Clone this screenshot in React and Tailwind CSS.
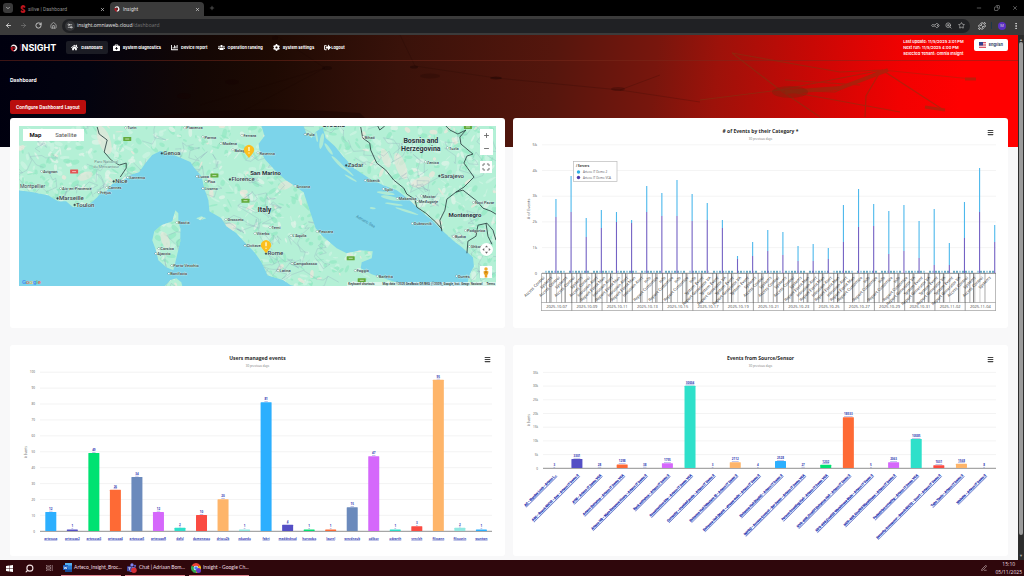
import React from "react";
import {
  ChevronDown, X, Plus, ArrowLeft, ArrowRight, RotateCw, House, Settings2, KeyRound, ZoomIn, Star,
  Puzzle, EllipsisVertical, Minus, Copy, Menu, Maximize, Search, PenLine,
} from "lucide-react";
import { FaHome, FaBriefcaseMedical, FaChartBar, FaUsers, FaCog, FaSignOutAlt } from "react-icons/fa";

/* ---------- browser chrome ---------- */

function BrowserBar() {
  return (
    <header className="font-['Inter',sans-serif] text-[5px] leading-none">
      <div className="flex h-4 items-end bg-black text-[#8d8d8d]">
        <button aria-label="Search tabs" className="mb-[3px] ml-[3px] flex size-[10px] items-center justify-center rounded-[3px] bg-[#3a3a3a] text-[#c9c9c9]">
          <ChevronDown size={6} strokeWidth={3} />
        </button>
        <div className="ml-[5px] flex h-[14px] w-[92px] items-center pl-[2px] pr-[5px]">
          <svg viewBox="0 0 6 8" className="h-2 w-[6px]" aria-hidden="true">
            <path d="M3 0 5 1.2 5 2.6 3 2 2 3 5 5.2 5 7 3 8 1 7 1 5.6 3 6.3 4 5.5 1 3.5 1 1.5Z" fill="#c2161e" stroke="#c2161e" strokeWidth="0.600" />
          </svg>
          <span className="ml-[2px] flex-1 whitespace-nowrap font-['Roboto',sans-serif]">silive | Dashboard</span>
          <button aria-label="Close silive tab" className="text-[#d5d5d5]"><X size={5} strokeWidth={3} /></button>
        </div>
        <div className="flex h-[14px] w-[94px] items-center rounded-t-[4px] bg-[#3b3b3b] px-1 text-[#dedede]">
          <LogoMark className="size-[6px]" />
          <span className="ml-[3px] flex-1 font-['Roboto',sans-serif]">Insight</span>
          <button aria-label="Close Insight tab"><X size={5} strokeWidth={3} /></button>
        </div>
        <button aria-label="New tab" className="mb-[5px] ml-[5px] text-[#8a8a8a]"><Plus size={6} /></button>
        <div className="mb-[5px] ml-auto flex gap-3 pr-[6px] text-[#aaa]">
          <button aria-label="Minimise"><Minus size={6} /></button>
          <button aria-label="Restore"><Copy size={6} className="-scale-x-100" /></button>
          <button aria-label="Close window"><X size={6} /></button>
        </div>
      </div>
      <div className="flex h-[19px] items-center bg-[#3b3b3b] pl-[5px] pr-1 text-[#d6d6d6]">
        <div className="flex w-[57px] items-center gap-2">
          <button aria-label="Back"><ArrowLeft size={7} strokeWidth={3} /></button>
          <button aria-label="Forward" className="text-[#848484]"><ArrowRight size={7} strokeWidth={2} /></button>
          <button aria-label="Reload"><RotateCw size={7} strokeWidth={3} /></button>
          <button aria-label="Home"><House size={7} strokeWidth={2} /></button>
        </div>
        <div className="flex h-[14px] flex-1 items-center rounded-full bg-[#202124] pl-[3px] pr-[5px]">
          <span className="flex size-[10px] items-center justify-center rounded-full bg-[#36373a]">
            <Settings2 size={6} strokeWidth={3} />
          </span>
          <span className="ml-[2px] flex-1 font-['Open_Sans',sans-serif] font-medium text-[#e8e8e8]">insight.omniaweb.cloud<span className="text-[#777]">/dashboard</span></span>
          <div className="flex gap-[6px]">
            <KeyRound size={7} className="rotate-45" /><ZoomIn size={7} /><Star size={7} />
          </div>
        </div>
        <div className="ml-2 flex items-center gap-[5px]">
          <button aria-label="Extensions"><Puzzle size={8} strokeWidth={3} /></button>
          <span className="h-[7px] w-px bg-[#1d3748]" />
          <span className="ml-px flex size-2 items-center justify-center rounded-full bg-[#5b2fc4] text-[4px]">M</span>
          <button aria-label="Browser menu" className="ml-px"><EllipsisVertical size={8} strokeWidth={3} /></button>
        </div>
      </div>
    </header>
  );
}

function LogoMark({ className }) {
  return (
    <svg viewBox="0 0 16 16" className={className} aria-hidden="true">
      <path d="M5 1.5A7 7 0 1 1 8 15 L6 12.5A4.6 4.6 0 0 0 11 8 4 4 0 0 0 6 4L1.5 6Q2 3 5 1.5Z" fill="#f5f0f0" />
      <path d="M1 7 7 4.5Q4 8 6.5 12L8.5 15.2Q1.500 14.500 1 7Z" fill="#c01522" />
      <circle cx="8.300" cy="7.800" r="2.200" fill="#8c111b" />
    </svg>
  );
}

/* ---------- app header ---------- */

const nav = [
  { label: "Dashboard", Icon: FaHome, active: true },
  { label: "System diagnostics", Icon: FaBriefcaseMedical },
  { label: "Device report", Icon: FaChartBar },
  { label: "Operation ranking", Icon: FaUsers },
  { label: "System settings", Icon: FaCog },
  { label: "Logout", Icon: FaSignOutAlt, tight: true },
];

function Flag() {
  return (
    <svg viewBox="0 0 14 12" className="h-[6px] w-[7px]" aria-hidden="true">
      <rect width="14" height="12" fill="#fff" />
      {[0, 1, 2, 3].map((i) => <rect key={i} y={i * 3.4} width="14" height="1.8" fill="#d8455a" />)}
      <rect width="8" height="7" fill="#31408f" />
    </svg>
  );
}

function AppHeader() {
  return (
    <div className="relative flex h-[26px] items-center border-b border-[#7a2a1c]/50 px-[10px] text-[4px] font-bold leading-[6px] text-white">
      <a href="#home" className="flex items-center text-[9px] font-bold leading-none" aria-label="Insight">
        <LogoMark className="size-2" />
        <span className="ml-px text-[#5c0f1d]">I</span><span>NSIGHT</span>
      </a>
      <nav className="ml-[10px] flex">
        {nav.map(({ label, Icon, active, tight }) => (
          <a key={label} href="#page"
            className={`flex h-[13px] items-center whitespace-nowrap rounded-[2px] px-[5px] ${tight ? "gap-0" : "gap-[3px]"} ${active ? "bg-[#1b1c24]" : ""}`}>
            <Icon size={7} />{label}
          </a>
        ))}
      </nav>
      <p className="ml-auto mr-[10px] whitespace-nowrap font-semibold">
        Last update: 11/5/2025 3:01 PM<br />Next run: 11/5/2025 4:00 PM<br />Selected Tenant: Omnia Insight
      </p>
      <button className="mb-[6px] flex h-3 items-center gap-[3px] rounded-[2px] bg-white px-[5px] text-[#344767]">
        <Flag />English
      </button>
    </div>
  );
}

function HeroNetwork() {
  return (
    <svg viewBox="0 35 1018 112" preserveAspectRatio="none" className="absolute inset-x-0 top-0 h-28 w-full" aria-hidden="true">
      <g fill="none" stroke="#7d3a12" strokeWidth="1.200" opacity="0.500">
        <path d="M732 53 780 90 835 92 882 70 942 109M732 53 840 72 882 70M780 90 882 70M865 117 866 96 880 72M780 90 900 112M785 80 860 85M820 117 780 90M700 100 780 90" />
        <path d="M785 92 840 88 888 70" strokeWidth="4" />
        <path d="M882 70 972 79" strokeWidth="0.700" />
        <path d="M925 107 945 110M965 79H976" strokeWidth="3" />
      </g>
      <ellipse cx="790" cy="92" rx="18" ry="6" fill="#6d2a10" opacity="0.400" />
      <g fill="none" stroke="#160502" strokeWidth="0.700" opacity="0.250">
        <path d="M200 105 325 68 275 35M400 35 415 66 496 78 620 90 700 102M620 90 660 75M230 118 325 68" />
      </g>
      <g fill="#150302" opacity="0.400">
        <ellipse cx="327" cy="68" rx="5" ry="2" /><ellipse cx="275" cy="38" rx="3" ry="2" />
        <ellipse cx="184" cy="96" rx="7" ry="3" /><ellipse cx="232" cy="82" rx="7" ry="2.500" />
        <ellipse cx="414" cy="67" rx="4" ry="1.500" /><ellipse cx="430" cy="76" rx="10" ry="2.500" opacity="0.500" />
        <ellipse cx="496" cy="78" rx="6" ry="1.500" /><ellipse cx="618" cy="89" rx="7" ry="2" opacity="0.600" />
        <path d="M140 118Q250 104 360 113L365 118Z" />
      </g>
    </svg>
  );
}

/* ---------- map ---------- */

function makeRandom(seed) {
  let s = seed;
  return () => { s = (s * 16807) % 2147483647; return s / 2147483647; };
}

const land = [
  "M19 126V190L33 192 48 195 58 201 66 201 73 207 88 205 97 197 101 192 107 190 112 184 122 181 130 175 139 172 146 162 152 155 160 151 168 153 176 156 190 162 194 168 201 176 204 188 208 200 209 211 221 218 226 226 236 233 245 243 254 252 261 262 267 275 283 280 290 285 296 286H404L395 282 371 274 360 268 361 262 371 258 372 251 360 250 346 253 336 248 322 236 315 228 309 210 303 192 296 187 285 180 276 172 265 160 259 150 258 144 264 136 261 126Z",
  "M303 126 306 134 311 138 315 132 322 127 325 138 334 146 343 157 353 168 368 178 382 185 396 190 408 199 418 209 430 219 441 230 452 240 461 247 472 257 473 266 468 276 466 286H495V126Z",
  "M175 210 178 213 178 222 180 228 180 241 176 258 173 270 166 267 158 260 156 251 152 240 154 231 161 225 172 221Z",
  "M164 286 170 280 176 278 181 282 182 286Z",
  "M196 218 201 216 206 218 200 220Z",
];
const islands = [
  [321, 141, 2, 8, 10], [328, 149, 1.5, 7, -35], [338, 163, 1.5, 10, -45], [346, 170, 1, 9, -50], [350, 178, 1, 7, -60],
  [385, 193, 9, 1.5, 8], [390, 198, 10, 2, 12], [393, 204, 9, 1, 8], [406, 211, 12, 1.2, 18], [372, 208, 3, 1, 5], [316, 137, 1, 5, -10],
];
const borders = [
  "M97 127 99 134 107 140 104 152 111 160 119 165 126 163 126 168 120 177",
  "M360 127 362 138 369 143 370 150 376 163 385 170 393 180 403 188 406 194 414 199 416 207 425 213 435 222 441 229",
  "M441 231 439 220 444 210 446 199 455 192 463 187 473 177 463 163 466 156 472 154 460 144 459 137 465 130 457 134 449 130 445 126",
  "M455 192 462 190 476 201 482 208 490 211 495 214M466 253 467 241 475 236 477 225 486 223 492 230 495 240M485 223 487 236 491 244M377 126 379 130 384 126",
];
const cities = [
  ["Turin", 125, 129.5], ["Piacenza", 184, 129.5], ["Parma", 202, 138.5], ["Modena", 220, 145], ["Ferrara", 241, 137],
  ["Bologna", 232, 151.5], ["Ravenna", 257, 154.5], ["Genoa", 161, 155], ["Avignon", 41, 173], ["Aix-en-Provence", 60, 190],
  ["Marseille", 57, 200], ["Toulon", 74, 206.5], ["Nice", 113, 183], ["Cannes", 106, 189], ["Fréjus", 98, 194], ["Sanremo", 127, 179],
  ["Lucca", 196, 178], ["Pisa", 205, 183], ["Livorno", 202, 190], ["Florence", 229, 181], ["Grosseto", 225, 221], ["Bastia", 176, 224],
  ["Corsica", 158, 250], ["Ajaccio", 155, 255], ["Porto-Vecchio", 171, 267], ["Bonifacio", 168, 275], ["Civitavecchia", 244, 247],
  ["Ancona", 294, 187.5], ["Terni", 269, 229], ["Viterbo", 254, 235], ["Pescara", 316, 233], ["L'Aquila", 290, 237], ["Rome", 265, 255],
  ["Latina", 277, 272], ["Foggia", 354, 272], ["Barletta", 376, 277.5], ["Pula", 304, 136], ["Zadar", 345, 167], ["Šibenik", 364, 182],
  ["Split", 382, 190.5], ["Bihać", 362, 138.5], ["Tuzla", 446, 149.5], ["Zenica", 424, 163.5], ["Sarajevo", 438, 177.5],
  ["Mostar", 420, 197.5], ["Međugorje", 416, 203], ["Makarska", 396, 200], ["Dubrovnik", 411, 225], ["Podgorica", 464, 232],
  ["Budva", 452, 238], ["Shkodër", 468, 248], ["Durrës", 455, 277.5], ["Novi Pazar", 472, 204], ["Campobasso", 291, 265],
];
const bigCities = ["Genoa", "Marseille", "Nice", "Florence", "Rome", "Sarajevo", "Zadar", "Toulon"];

function MapArt() {
  const rnd = makeRandom(77);
  const patches = Array.from({ length: 1500 }, () => [19 + rnd() * 476, 126 + rnd() * 160, 1 + rnd() * 4, 0.5 + rnd() * 2, rnd() * 180, rnd()]);
  const roads = Array.from({ length: 130 }, () => {
    let x = 19 + rnd() * 476, y = 126 + rnd() * 160, d = `M${x} ${y}`;
    for (let i = 0; i < 6; i++) { x += (rnd() - 0.5) * 24; y += (rnd() - 0.5) * 20; d += `L${x} ${y}`; }
    return d;
  });
  return (
    <svg viewBox="19 126 476 160" className="block w-full font-[Roboto,sans-serif]" role="img" aria-label="Map of Italy">
      <defs><clipPath id="land">{land.map((d) => <path key={d} d={d} />)}</clipPath></defs>
      <rect x="19" y="126" width="476" height="160" fill="#7cd4ea" />
      {land.map((d) => <path key={d} d={d} fill="#b4f0d6" />)}
      <g clipPath="url(#land)">
        {patches.map(([x, y, a, b, r, k], i) => (
          <ellipse key={i} cx={x} cy={y} rx={a} ry={b} transform={`rotate(${r} ${x} ${y})`}
            fill={k < 0.4 ? "#93e8c3" : k < 0.75 ? "#cdf4e2" : k < 0.93 ? "#e3f3ea" : "#f2e6dc"} opacity="0.700" />
        ))}
        {[[104, 140, 6, 15], [85, 176, 8, 4], [285, 185, 8, 4], [400, 166, 5, 14], [420, 182, 10, 5], [385, 158, 4, 10], [228, 228, 8, 5], [165, 240, 4, 9]].map(([x, y, a, b]) => (
          <ellipse key={x + y} cx={x} cy={y} rx={a} ry={b} fill="#eee5da" opacity="0.600" transform={`rotate(-20 ${x} ${y})`} />
        ))}
        {roads.map((d, i) => <path key={i} d={d} fill="none" stroke="#8fa9bd" strokeWidth="0.500" opacity="0.600" />)}
      </g>
      {islands.map(([x, y, a, b, r], i) => <ellipse key={i} cx={x} cy={y} rx={a} ry={b} fill="#aeead5" transform={`rotate(${r} ${x} ${y})`} />)}
      {borders.map((d) => <path key={d} d={d} fill="none" stroke="#34484a" strokeWidth="0.900" />)}
      {[[127, 139, "#63ab3b"], [214, 175.5, "#63ab3b"], [245, 200.5, "#63ab3b"], [74, 171.5, "#e25353"], [350, 258, "#63ab3b"], [361, 280, "#63ab3b"], [467, 127, "#63ab3b"]].map(([x, y, c]) => (
        <g key={x}><rect x={x - 4} y={y - 2} width="8" height="4" rx="0.500" fill={c} /><rect x={x - 2} y={y - 0.5} width="4" height="1" fill="#fff" opacity="0.600" /></g>
      ))}
      <g fill="#33444a" fontSize="5" stroke="#d9f3ea" strokeWidth="0.600" paintOrder="stroke">
        {cities.map(([name, x, y]) => {
          const big = bigCities.includes(name);
          return (
            <g key={name}>
              <circle cx={x + 0.5} cy={y - 1.7} r="0.900" fill={big ? "#33444a" : "#fff"} stroke="#33444a" strokeWidth="0.400" />
              <text x={x + 2} y={y} fontSize={big ? 6 : 4} fontWeight="500">{name}</text>
            </g>
          );
        })}
        <text x="20" y="187.500">Montpellier</text>
        <text x="94" y="163" fontSize="4" fill="#4f8d7a">Parc National</text>
        <text x="93" y="168" fontSize="4" fill="#4f8d7a">du Mercantour</text>
      </g>
      <g fill="#26343a" fontWeight="700" fontSize="7" textAnchor="middle" stroke="#d9f3ea" strokeWidth="0.700" paintOrder="stroke">
        <text x="264" y="211.500">Italy</text><text x="265" y="174.500" fontSize="6">San Marino</text>
        <text x="420" y="143">Bosnia and</text><text x="420" y="150.500">Herzegovina</text>
        <text x="464" y="216.500" fontSize="6">Montenegro</text><text x="333" y="127">Croatia</text>
      </g>
      <text x="355" y="217" fontSize="4" fill="#3f86a4" transform="rotate(30 355 217)">Adriatic Sea</text>
      {[[248.5, 151], [265.5, 246]].map(([x, y]) => (
        <g key={x}>
          <path d={`M${x} ${y + 7}L${x - 4} ${y + 2}A5 5 0 1 1 ${x + 4} ${y + 2}Z`} fill="#fcbf1e" />
          <path d={`M${x} ${y - 4}V${y}M${x} ${y + 1.5}V${y + 2.5}`} stroke="#fff3c8" strokeWidth="1.500" />
        </g>
      ))}
    </svg>
  );
}

function MapCard() {
  return (
    <section className="rounded-[3px] bg-white px-[9px] pt-2">
      <div className="relative overflow-hidden font-[Roboto,sans-serif] text-[6px] leading-none">
        <MapArt />
        <div className="absolute left-1 top-[3px] flex h-3 items-center bg-white">
          <button className="w-[25px] font-semibold text-black">Map</button>
          <button className="w-9 text-[#555]">Satellite</button>
        </div>
        <div className="absolute right-1 top-[3px] flex w-3 flex-col items-center text-[#666]">
          <button aria-label="Zoom in" className="flex size-[13px] items-center justify-center bg-white"><Plus size={7} strokeWidth={3} /></button>
          <button aria-label="Zoom out" className="flex size-[13px] items-center justify-center bg-white"><Minus size={7} strokeWidth={3} /></button>
          <button aria-label="Full screen" className="mt-[6px] flex size-3 items-center justify-center bg-white"><Maximize size={8} strokeWidth={3} /></button>
        </div>
        <div className="absolute bottom-2 right-1 flex w-3 flex-col items-center gap-[10px]">
          <button aria-label="Map camera controls" className="flex size-[13px] items-center justify-center rounded-full bg-white">
            <svg viewBox="0 0 24 24" className="size-[9px]" fill="#666"><path d="m12 1 4 5H8ZM12 23l4-5H8ZM1 12l5-4v8ZM23 12l-5-4v8Z" /></svg>
          </button>
          <button aria-label="Street view" className="flex size-3 items-center justify-center bg-white">
            <svg viewBox="0 0 12 22" className="h-[11px] w-[6px]"><circle cx="6" cy="4" r="3.500" fill="#f0a92a" /><path d="M1 9Q6 6 11 9L10 15H8.500V21H3.500V15H2Z" fill="#eaa020" /><path d="M4 9H8L7 12H5Z" fill="#b97612" /></svg>
          </button>
        </div>
        <span className="absolute bottom-px left-[3px] text-[6px] font-medium">
          <span className="text-[#4285f4]">G</span><span className="text-[#ea6a50]">o</span><span className="text-[#f4c63d]">o</span><span className="text-[#4285f4]">g</span><span className="text-[#6db98a]">l</span><span className="text-[#ea6a50]">e</span>
        </span>
        <div className="absolute bottom-0 right-0 flex gap-1 whitespace-nowrap bg-[#eaf6f3]/70 px-px text-[3px] font-medium leading-[4px] text-[#1d2b2f]">
          <span className="mr-1">Keyboard shortcuts</span><span>Map data ©2025 GeoBasis-DE/BKG (©2009), Google, Inst. Geogr. Nacional</span><a href="#terms">Terms</a>
        </div>
      </div>
    </section>
  );
}

/* ---------- charts ---------- */

function ChartCard({ title, children }) {
  return (
    <section className="relative rounded-[3px] bg-white font-['Open_Sans',sans-serif]">
      <div className="flex flex-col items-center pb-[2px] pt-[10px]">
        <h2 className="text-[5px] font-bold leading-[6px] text-[#2d2d2d]">{title}</h2>
        <p className="mt-[3px] text-[3px] leading-1 text-[#777]">30 previous days</p>
      </div>
      <button aria-label={`${title} menu`} className="absolute right-[14px] top-[11px] text-[#444]"><Menu size={7} strokeWidth={4} /></button>
      {children}
    </section>
  );
}

// [top of the first server's share, top of the second server's share]
const tops = [
  [199, 217], [176, 212], [218, 237], [210, 228], [212, 222], [220, 223], [186, 212], [193, 216], [180, 216], [194, 221],
  [203, 220], [220, 228], [256, 259], [242, 256], [230, 251], [232, 255], [246, 261], [244, 261], [248, 259], [205, 242],
  [189, 227], [204, 226], [211, 254], [205, 251], [221, 258], [209, 265], [243, 265], [202, 238], [168, 212], [225, 242],
];
const categories = ["Access Control", "Report Event Man", "Info", "Report Generator VA", "Systems", "Intrusion Alert", "Report Customize", "System Event"];

function CategoryChart() {
  return (
    <svg viewBox="513 143 495 185" className="block w-full" role="img" aria-label="Events by category">
      {[5, 4, 3, 2, 1, 0].map((k) => (
        <g key={k}>
          <line x1="542" x2="996" y1={273.3 - k * 25.7} y2={273.3 - k * 25.7} stroke={k ? "#ececec" : "#333"} strokeWidth="0.600" />
          <text x="537" y={274.5 - k * 25.7} fontSize="4" textAnchor="end" fill="#555">{k ? `${k}k` : "0"}</text>
        </g>
      ))}
      <text fontSize="4" fill="#555" textAnchor="middle" transform="translate(530 209) rotate(-90)"># of Events</text>
      {Array.from({ length: 150 }, (_, i) => i % 8 !== 7 && (
        <rect key={i} x={545 + i * 3} y="270.800" width="2" height="2" fill={i % 3 ? "#4c9ab8" : "#8fc6de"} opacity="0.850" />
      ))}
      {tops.map(([a, b], i) => {
        const x = 555.4 + i * 15.13;
        return (
          <g key={i}>
            <rect x={x} y={a} width="1.100" height={b - a} fill="#4db8ec" />
            <rect x={x} y={b} width="1.100" height={273 - b} fill="#7462c4" />
          </g>
        );
      })}
      <g fill="none" stroke="#777" strokeWidth="0.500">
        <path d="M541.500 273V311M995.500 273V311M541.500 302.500H995.500M541.500 310.500H995.500" />
        {Array.from({ length: 89 }, (_, i) => i % 7 !== 4 && <line key={i} x1={546.5 + i * 5.04} x2={546.5 + i * 5.04} y1="273" y2="302.500" stroke={i % 3 === 0 ? "#555" : "#999"} />)}
        {Array.from({ length: 29 }, (_, i) => <line key={i} x1={550 + i * 15.13} x2={550 + i * 15.13} y1="273" y2="302.500" stroke="#777" strokeWidth="1" />)}
        {Array.from({ length: 14 }, (_, i) => <line key={i} x1={571.8 + i * 30.26} x2={571.8 + i * 30.26} y1="273" y2="310.500" stroke="#444" />)}
      </g>
      <g fontSize="4" fill="#222" textAnchor="end">
        {Array.from({ length: 60 }, (_, i) => (
          <text key={i} transform={`translate(${545 + i * 7.56} 278) rotate(-45)`}>{categories[(i * 3 + (i % 7)) % 8]}</text>
        ))}
      </g>
      <g fontSize="4" fill="#444" textAnchor="middle">
        {Array.from({ length: 15 }, (_, i) => {
          const d = new Date(Date.UTC(2025, 9, 7 + i * 2)).toISOString().slice(0, 10);
          return <text key={i} x={556.7 + i * 30.26} y="308">{d}</text>;
        })}
      </g>
      <g fontSize="4" fill="#555">
        <rect x="573.500" y="161.500" width="43.500" height="20" fill="#fff" stroke="#bbb" strokeWidth="0.700" />
        <text x="576" y="167" fontWeight="700" fill="#333" fontSize="3">/ Servers</text>
        <circle cx="578.500" cy="172" r="1.700" fill="#2fb1e6" /><text x="583" y="173.300" fontSize="3">Arteco IT Demo 2</text>
        <circle cx="578.500" cy="177.500" r="1.700" fill="#4b3aa9" /><text x="583" y="178.800" fontSize="3">Arteco IT Demo VCA</text>
      </g>
    </svg>
  );
}

const colors = ["#2caffe", "#544fc5", "#00e272", "#fe6a35", "#6b8abc", "#d568fb", "#2ee0ca", "#fa4b42", "#feb56a", "#91e8e1"];

const users = [
  ["artecosa", 12], ["artecosa2", 1], ["artecosa3", 49], ["artecosa4", 26], ["artecosa5", 34], ["artecosaR", 12], ["dafsl", 2],
  ["domenesso", 10], ["drisco2k", 20], ["eduardo", 1], ["fabri", 81], ["maddndnod", 4], ["horvados", 1], ["laurel", 1],
  ["wnvdneub", 15], ["odikov", 47], ["odearth", 1], ["vrnclch", 3], ["filcsann", 95], ["filcosnin", 2], ["wuntwn", 1],
];

function UsersChart() {
  return (
    <svg viewBox="10 370 495 186" className="block w-full" role="img" aria-label="Users managed events">
      {Array.from({ length: 11 }, (_, k) => (
        <g key={k}>
          <line x1="40" x2="492" y1={531.3 - k * 15.91} y2={531.3 - k * 15.91} stroke={k ? "#ebebeb" : "#444"} strokeWidth="0.600" />
          <text x="35" y={532.5 - k * 15.91} fontSize="3" textAnchor="end" fill="#555">{k * 10}</text>
        </g>
      ))}
      <text fontSize="3" fill="#555" textAnchor="middle" transform="translate(27 452) rotate(-90)"># Events</text>
      {users.map(([name, n], i) => {
        const x = 50.8 + i * 21.53, h = n * 1.591;
        return (
          <g key={name} textAnchor="middle" fontWeight="700" fill="#3542b4" fontSize="3">
            <rect x={x - 5.5} y={531 - h} width="11" height={h} rx="0.500" fill={colors[i % 10]} />
            <text x={x} y={529 - h} textDecoration="underline">{n}</text>
            <a href={`#${name}`}><text x={x} y="539.500" textDecoration="underline">{name}</text></a>
          </g>
        );
      })}
    </svg>
  );
}

const sources = [
  ["AC - Stardus Lock - Arteco I...", 3], ["A5C - Bosch MIC12 - Axe - Arteco IT Demo 2", 3301], ["ATM - Arteco IT Demo VCA", 28],
  ["Arteco Entrance - Arteco IT Demo VCA", 1298], ["Arteco HQ - Main Entrance Hours - Arteco IT Demo 2", 38], ["Back entrance - Arteco IT Demo 2", 1755],
  ["Construction Site - Arteco IT Demo VCA", 30004], ["Correctly - crushed posts - Arteco IT Demo 2", 3], ["Entrance Hall (Western 5) - Arteco IT Demo 2", 2112],
  ["Entrance Hall (Main) - stream main - Arteco IT Demo 2", 4], ["Entrance Hall (Rapid) - Arteco IT Demo 2", 2528],
  ["IMPRO - Access Control - Bar Demo - Arteco IT Demo VCA", 27], ["Person Counting Hall - Arteco IT Demo VCA", 1202],
  ["NVR-409_Conf01 Entrance Hall - Arteco IT Demo 2", 18533], ["NVR-409_Conf02 Warehouse Main - Arteco IT Demo 2", 5],
  ["NVR-409_Conf03 Warehouse - Arteco IT Demo 2", 2063], ["Pedestrian crossing - Arteco IT Demo VCA", 10585],
  ["Security Connector - Bosch MIC12 - Door1 - Arteco IT Demo 2", 1031], ["Tapo Testo - Arteco IT Demo 2", 1568], ["Website - Arteco IT Demo 2", 8],
];

function SourcesChart() {
  return (
    <svg viewBox="513 370 495 186" className="block w-full" role="img" aria-label="Events from source or sensor">
      {Array.from({ length: 8 }, (_, k) => (
        <g key={k}>
          <line x1="543" x2="996" y1={468.3 - k * 13.7} y2={468.3 - k * 13.7} stroke={k ? "#ebebeb" : "#444"} strokeWidth="0.600" />
          <text x="538" y={469.5 - k * 13.7} fontSize="3" textAnchor="end" fill="#555">{k ? `${k * 5}k` : "0"}</text>
        </g>
      ))}
      <text fontSize="3" fill="#555" textAnchor="middle" transform="translate(530 420) rotate(-90)"># Events</text>
      {sources.map(([name, n], i) => {
        const x = 554.3 + i * 22.62, h = n * 0.00274;
        return (
          <g key={name} fontWeight="700" fill="#3542b4" fontSize="3">
            {n > 100 && <rect x={x - 5.5} y={468 - h} width="11" height={h} rx="0.500" fill={colors[i % 10]} />}
            <text x={x} y={466 - h} textAnchor="middle" textDecoration="underline">{n}</text>
            <a href="#source" className="font-['Inter',sans-serif]">
              <text textAnchor="end" textDecoration="underline" stroke="#3542b4" strokeWidth="0.250" transform={`translate(${x + 2} 475.5) rotate(-45)`}>{name}</text>
            </a>
          </g>
        );
      })}
    </svg>
  );
}

/* ---------- taskbar ---------- */

function WordIcon() {
  return (
    <svg viewBox="0 0 18 18" className="size-[9px] shrink-0" aria-hidden="true">
      <rect x="4" width="14" height="18" rx="1" fill="#2b7cd3" /><rect x="4" width="14" height="5" fill="#56b0f2" /><rect x="4" y="13" width="14" height="5" fill="#164a96" />
      <rect y="4" width="10" height="10" rx="1" fill="#185abd" /><path d="m2 7 1.500 5L5 8l1.500 4L8 7" fill="none" stroke="#fff" strokeWidth="1.200" />
    </svg>
  );
}
function TeamsIcon() {
  return (
    <svg viewBox="0 0 18 18" className="size-[10px] shrink-0" aria-hidden="true">
      <circle cx="9" cy="3.500" r="3" fill="#7f85f2" /><circle cx="14.500" cy="5" r="2" fill="#5c63d2" /><rect x="4" y="7" width="12" height="9" rx="3" fill="#6670df" />
      <rect y="6" width="9" height="9" rx="1" fill="#4048a8" /><path d="M2 8.500H7M4.500 8.500V13" stroke="#fff" /><circle cx="12.500" cy="13" r="5" fill="#d52e36" />
    </svg>
  );
}
function ChromeIcon() {
  return (
    <svg viewBox="0 0 18 18" className="size-[10px] shrink-0" aria-hidden="true">
      <path d="M9 9 1.200 4.500A9 9 0 0 1 16.800 4.500Z" fill="#ea4335" /><path d="M9 9 16.800 4.500A9 9 0 0 1 9 18Z" fill="#fbbc05" /><path d="M9 9V18A9 9 0 0 1 1.200 4.500Z" fill="#34a853" />
      <circle cx="9" cy="9" r="4.200" fill="#fff" /><circle cx="9" cy="9" r="3.200" fill="#4285f4" /><circle cx="13.500" cy="13.500" r="4.500" fill="#6338c8" />
    </svg>
  );
}

const tasks = [["Arteco_Insight_Broc...", WordIcon], ["Chat | Adriaan Bom...", TeamsIcon], ["Insight - Google Ch...", ChromeIcon]];

function Taskbar() {
  return (
    <footer className="flex h-4 items-center bg-[#2f070c] font-['Open_Sans',sans-serif] text-[5px] leading-none text-[#f0dfe1]">
      <div className="flex w-[61px] items-center gap-3 pl-[6px]">
        <button aria-label="Start">
          <svg viewBox="0 0 14 14" className="size-[7px]" fill="#fff"><path d="M0 2 6.500 1V6.600H0ZM7.300.900 14 0V6.600H7.300ZM0 7.400H6.500V13L0 12ZM7.300 7.400H14V14L7.300 13.100Z" /></svg>
        </button>
        <button aria-label="Search"><Search size={9} strokeWidth={3} className="-scale-x-100" /></button>
        <button aria-label="Task view">
          <svg viewBox="0 0 14 12" className="h-[6px] w-[7px]" fill="none" stroke="#b79da0" strokeWidth="1.300"><path d="M1 0V2H9V0M1 12V10H9V12M1 4H9V8H1ZM12.500 0V12" /></svg>
        </button>
      </div>
      <div className="flex gap-1 self-stretch">
        {tasks.map(([label, Icon]) => (
          <button key={label} className="flex w-[60px] items-center gap-[2px] whitespace-nowrap border-b border-[#e58a94] pl-[2px] font-['Lato',sans-serif]">
            <Icon />{label}
          </button>
        ))}
      </div>
      <PenLine size={6} className="ml-auto mr-2" aria-hidden="true" />
      <div className="pr-[2px] text-center leading-2">15:10<br />05/11/2025</div>
    </footer>
  );
}

/* ---------- page ---------- */

function Scrollbar() {
  return (
    <div className="flex w-[6px] flex-col items-center justify-between bg-[#2c2c2c] py-[2px]" aria-hidden="true">
      <span className="text-[4px] leading-[5px] text-[#aaa]">▲</span>
      <span className="mb-[18px] w-1 flex-1 rounded-full bg-[#9b9b9b]" />
      <span className="text-[4px] leading-[5px] text-[#aaa]">▼</span>
    </div>
  );
}

export default function App() {
  return (
    <div className="flex min-h-screen flex-col overflow-hidden bg-[#f8f8f9]">
      <BrowserBar />
      <div className="flex flex-1">
        <main className="relative min-w-0 flex-1 bg-[linear-gradient(96deg,#00000f_0%,#03030f_9%,#140704_20%,#1e0a03_27%,#39120a_39%,#55160d_54%,#78160d_64%,#9d120a_70%,#c80805_79%,#f20101_88%,#ff0000_94%)] bg-[length:100%_112px] bg-no-repeat font-['Inter',sans-serif]">
          <HeroNetwork />
          <AppHeader />
          <div className="relative px-[10px] pb-1 pt-[15px]">
            <h1 className="text-[5px] font-bold leading-2 text-white">Dashboard</h1>
            <button className="mt-4 block h-[14px] rounded-[2px] bg-[#b90d0d] px-[6px] font-['Roboto',sans-serif] text-[5px] font-semibold leading-none text-white">Configure Dashboard Layout</button>
            <div className="mt-1 grid grid-cols-2 gap-x-2 gap-y-[17px]">
              <MapCard />
              <ChartCard title="# of Events by their Category *"><CategoryChart /></ChartCard>
              <ChartCard title="Users managed events"><UsersChart /></ChartCard>
              <ChartCard title="Events from Source/Sensor"><SourcesChart /></ChartCard>
            </div>
          </div>
        </main>
        <Scrollbar />
      </div>
      <Taskbar />
    </div>
  );
}
